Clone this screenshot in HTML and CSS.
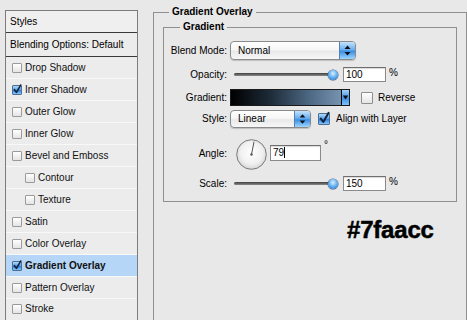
FILE: index.html
```html
<!DOCTYPE html>
<html>
<head>
<meta charset="utf-8">
<link rel="stylesheet" href="styles.css">
</head>
<body>
<div class="app">
  <aside class="styles-panel">
    <div class="panel-head">Styles</div>
    <div class="blend-opt">Blending Options: Default</div>
    <ul class="fx-list">
      <li class="fx"><span class="cb"></span>Drop Shadow</li>
      <li class="fx"><span class="cb on"><svg viewBox="0 0 10 10"><path d="M1.8 4.6 L4.3 8 L9.6 -1.2"/></svg></span>Inner Shadow</li>
      <li class="fx"><span class="cb"></span>Outer Glow</li>
      <li class="fx"><span class="cb"></span>Inner Glow</li>
      <li class="fx"><span class="cb"></span>Bevel and Emboss</li>
      <li class="fx sub"><span class="cb"></span>Contour</li>
      <li class="fx sub"><span class="cb"></span>Texture</li>
      <li class="fx"><span class="cb"></span>Satin</li>
      <li class="fx"><span class="cb"></span>Color Overlay</li>
      <li class="fx sel"><span class="cb on"><svg viewBox="0 0 10 10"><path d="M1.8 4.6 L4.3 8 L9.6 -1.2"/></svg></span>Gradient Overlay</li>
      <li class="fx"><span class="cb"></span>Pattern Overlay</li>
      <li class="fx last"><span class="cb"></span>Stroke</li>
    </ul>
  </aside>

  <main class="settings">
    <fieldset class="group outer">
      <legend>Gradient Overlay</legend>
      <fieldset class="group inner">
        <legend>Gradient</legend>

        <div class="row r-blend">
          <span class="lbl">Blend Mode:</span>
          <div class="popup w-blend">
            <span class="popup-text">Normal</span>
            <span class="stepper"><svg viewBox="0 0 15 17"><path d="M4.5 7 L7.5 3.5 L10.5 7 Z M4.5 10 L7.5 13.5 L10.5 10 Z"/></svg></span>
          </div>
        </div>

        <div class="row r-opacity">
          <span class="lbl">Opacity:</span>
          <div class="slider"><span class="track"></span><span class="knob"></span></div>
          <span class="num">100</span><span class="unit">%</span>
        </div>

        <div class="row r-gradient">
          <span class="lbl">Gradient:</span>
          <div class="grad">
            <span class="grad-fill"></span>
            <span class="grad-arrow"><svg viewBox="0 0 7 15"><path d="M0.8 5.5 L3.5 9.5 L6.2 5.5 Z"/></svg></span>
          </div>
          <span class="cb big"></span><span class="cb-text rev">Reverse</span>
        </div>

        <div class="row r-style">
          <span class="lbl">Style:</span>
          <div class="popup w-style">
            <span class="popup-text">Linear</span>
            <span class="stepper"><svg viewBox="0 0 15 17"><path d="M4.5 7 L7.5 3.5 L10.5 7 Z M4.5 10 L7.5 13.5 L10.5 10 Z"/></svg></span>
          </div>
          <span class="cb big on"><svg viewBox="0 0 10 10"><path d="M1.8 4.6 L4.3 8 L9.6 -1.2"/></svg></span><span class="cb-text align">Align with Layer</span>
        </div>

        <div class="row r-angle">
          <span class="lbl">Angle:</span>
          <svg class="dial" viewBox="0 0 31 31">
            <defs>
              <radialGradient id="dialg" cx="50%" cy="45%" r="60%">
                <stop offset="0" stop-color="#ffffff"/>
                <stop offset="0.6" stop-color="#f1f1f1"/>
                <stop offset="1" stop-color="#cfcfcf"/>
              </radialGradient>
            </defs>
            <circle cx="15.5" cy="15.5" r="14.8" fill="url(#dialg)" stroke="#7a7a7a" stroke-width="1"/>
            <line x1="15.5" y1="15.5" x2="18" y2="2.8" stroke="#555" stroke-width="1"/>
            <circle cx="15.5" cy="15.5" r="1.2" fill="#555"/>
          </svg>
          <span class="num angle-num">79<span class="caret"></span></span><span class="unit deg">°</span>
        </div>

        <div class="row r-scale">
          <span class="lbl">Scale:</span>
          <div class="slider"><span class="track"></span><span class="knob"></span></div>
          <span class="num">150</span><span class="unit">%</span>
        </div>
      </fieldset>
      <div class="hex">#7faacc</div>
    </fieldset>
  </main>
</div>
</body>
</html>
```
FILE: styles.css
```css
html, body {
  margin: 0;
  height: 320px;
  overflow: hidden;
}
body {
  background: #e8e8e8;
  font-family: "Liberation Sans", Arial, sans-serif;
  font-size: 10px;
  line-height: 12px;
  color: #000;
}
.app {
  display: flex;
  align-items: flex-start;
  padding: 6px 0 0 5px;
}

/* ---------- left styles list ---------- */
.styles-panel {
  width: 131px;
  height: 310px;
  box-sizing: content-box;
  margin-top: 4px;
  border: 1px solid #7c7c7c;
  border-bottom: none;
  background: #ececec;
  flex: none;
  overflow: hidden;
}
.panel-head {
  height: 21px;
  line-height: 21px;
  padding-left: 4px;
  background: #efefef;
  border-bottom: 1px solid #3a3a3a;
}
.blend-opt {
  height: 23px;
  line-height: 23px;
  padding-left: 4px;
  border-bottom: 1px solid #3a3a3a;
}
.fx-list {
  list-style: none;
  margin: 0;
  padding: 0;
}
.fx {
  height: 21px;
  border-bottom: 1px solid #f8f8f8;
  display: flex;
  align-items: center;
  gap: 3px;
  padding-left: 6px;
  color: #111;
}
.fx.last {
  height: 20px;
  border-bottom: none;
}
.fx.sub {
  padding-left: 19px;
}
.fx.sel {
  background: #b5d6f6;
  font-weight: bold;
}

/* checkboxes */
.cb {
  width: 8px;
  height: 8px;
  border: 1px solid #9a9a9a;
  border-radius: 1px;
  background: linear-gradient(#ffffff, #e4e4e4);
  flex: none;
  display: block;
}
.cb.big {
  width: 10px;
  height: 10px;
  border-color: #8e8e8e;
}
.cb.on {
  background: linear-gradient(#b3dafc, #4f9ce8 50%, #2d82de 55%, #86c7fa);
  border-color: #4d6e94;
}
.cb svg {
  display: block;
  width: 100%;
  height: 100%;
  overflow: visible;
}
.cb svg path {
  fill: none;
  stroke: #16223a;
  stroke-width: 2;
  stroke-linecap: round;
  stroke-linejoin: round;
}

/* ---------- right settings ---------- */
.settings {
  margin-left: 15px;
  flex: none;
}
.group {
  margin: 0;
  border: 1px solid #8f8f8f;
  min-width: 0;
}
.group legend {
  padding: 0 3px;
  font-weight: bold;
  line-height: 12px;
}
.outer {
  width: 314px;
  height: 314px;
  box-sizing: border-box;
  padding: 1px 9px 0 9px;
  border-bottom: none;
  overflow: hidden;
}
.outer > legend {
  margin-left: 6px;
}
.inner {
  margin-top: 2px;
  padding: 0 0 10px 0;
}
.inner > legend {
  margin-left: 16px;
}

.row {
  display: flex;
  align-items: center;
}
.lbl {
  width: 63px;
  margin-right: 3px;
  text-align: right;
  flex: none;
}
.r-blend { margin-top: 8px; height: 19px; }
.r-opacity { margin-top: 7px; height: 15px; }
.r-gradient { margin-top: 7px; height: 17px; }
.r-style { margin-top: 4px; height: 18px; }
.r-angle { margin-top: 9px; height: 34px; }
.r-scale { margin-top: 5px; height: 15px; }

/* popups */
.popup {
  display: flex;
  box-sizing: border-box;
  border: 1px solid #8a8a8a;
  border-radius: 4px;
  background: linear-gradient(#ffffff, #f6f6f6 45%, #e9e9e9 55%, #f7f7f7);
  box-shadow: 0 1px 1px rgba(0, 0, 0, 0.18);
  overflow: hidden;
}
.w-blend { width: 126px; height: 19px; }
.w-style { width: 81px; height: 18px; }
.popup-text {
  flex: 1;
  padding-left: 7px;
  align-self: center;
}
.stepper {
  width: 15px;
  border-left: 1px solid #5a7fa8;
  background: linear-gradient(#c4e3fd, #69aef0 45%, #3a8fe6 55%, #9fd6fc);
}
.stepper svg {
  display: block;
  width: 100%;
  height: 100%;
}
.stepper path { fill: #101010; }

/* sliders */
.slider {
  display: flex;
  align-items: center;
  padding-left: 4px;
}
.track {
  width: 99px;
  height: 3px;
  border-radius: 2px;
  background: linear-gradient(#3e3e3e, #8a8a8a);
  display: block;
}
.knob {
  width: 10px;
  height: 10px;
  margin-left: -5px;
  border-radius: 50%;
  background: radial-gradient(circle at 50% 35%, #d8f0ff, #5aa8ee 55%, #1f6cc4);
  box-shadow: 0 0 0 0.5px #32557c;
  display: block;
}
.num {
  box-sizing: border-box;
  margin-left: 5px;
  width: 43px;
  height: 15px;
  line-height: 13px;
  padding-left: 2px;
  border: 1px solid #8a8a8a;
  border-top-color: #6e6e6e;
  background: #fff;
  box-shadow: inset 0 1px 1px rgba(0, 0, 0, 0.15);
  display: flex;
  align-items: center;
}
.unit {
  margin-left: 3px;
  align-self: flex-start;
  line-height: 12px;
}

/* gradient bar */
.grad {
  display: flex;
  width: 120px;
  height: 17px;
  box-sizing: border-box;
  border: 1px solid #1a1a1a;
}
.grad-fill {
  flex: 1;
  background: linear-gradient(to right, #000000, #1d2a37 35%, #4b6680 70%, #7592b0);
}
.grad-arrow {
  width: 7px;
  border-left: 1px solid #000;
  background: linear-gradient(#9fd0fb, #3d8fe4 55%, #7fc2f9);
}
.grad-arrow svg {
  display: block;
  width: 100%;
  height: 100%;
}
.grad-arrow path { fill: #0e0e0e; }

.r-gradient .cb.big { margin-left: 11px; }
.r-style .cb.big { margin-left: 7px; }
.cb-text.rev { margin-left: 5px; }
.cb-text.align { margin-left: 6px; }

/* angle */
.dial {
  width: 31px;
  height: 31px;
  margin-left: 6px;
  flex: none;
}
.angle-num {
  margin-left: 3px;
  width: 51px;
  height: 16px;
  margin-top: -3px;
}
.caret {
  display: inline-block;
  width: 1px;
  height: 11px;
  background: #000;
}
.unit.deg {
  margin-top: 2px;
}

/* big hex label */
.hex {
  margin-top: 14px;
  padding-left: 184px;
  font-size: 24px;
  line-height: 28px;
  font-weight: bold;
  color: #000;
  -webkit-text-stroke: 0.5px #000;
  letter-spacing: -0.2px;
}
```
